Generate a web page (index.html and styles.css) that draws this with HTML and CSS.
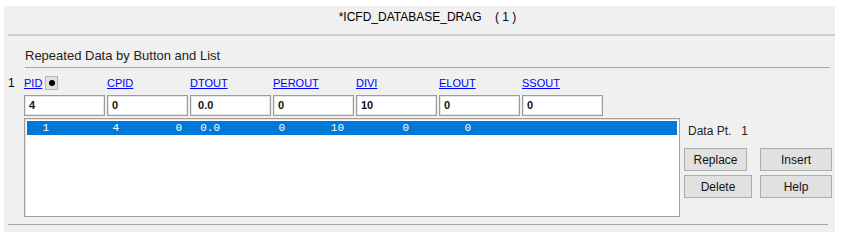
FILE: index.html
```html
<!DOCTYPE html>
<html lang="en">
<head>
  <meta charset="UTF-8" />
  <title>ICFD_DATABASE_DRAG</title>
  <link rel="stylesheet" href="styles.css">
</head>
<body>
  <div class="panel">
    <div class="title">*ICFD_DATABASE_DRAG    ( 1 )</div>

    <div class="section">
      <div class="legend">Repeated Data by Button and List</div>

      <div class="fields">
        <div class="rownum">1</div>
        <div class="head"><a href="#">PID</a><button class="pick"><span class="dot"></span></button></div>
        <div class="head"><a href="#">CPID</a></div>
        <div class="head"><a href="#">DTOUT</a></div>
        <div class="head"><a href="#">PEROUT</a></div>
        <div class="head"><a href="#">DIVI</a></div>
        <div class="head"><a href="#">ELOUT</a></div>
        <div class="head"><a href="#">SSOUT</a></div>

        <div></div>
        <div class="field">4</div>
        <div class="field">0</div>
        <div class="field"> 0.0</div>
        <div class="field">0</div>
        <div class="field">10</div>
        <div class="field">0</div>
        <div class="field">0</div>
      </div>

      <div class="body">
        <div class="list">
          <div class="item selected">
            <span class="c1">1</span>
            <span class="c2">4</span>
            <span class="c3">0</span>
            <span class="c4">0.0</span>
            <span class="c5">0</span>
            <span class="c6">10</span>
            <span class="c7">0</span>
            <span class="c8">0</span>
          </div>
        </div>
        <div class="side">
          <div class="datapt">Data Pt.&nbsp;&nbsp; 1</div>
          <div class="actions">
            <button class="replace">Replace</button>
            <button>Insert</button>
            <button class="delete">Delete</button>
            <button>Help</button>
          </div>
        </div>
      </div>

      <div class="bottom"></div>
    </div>
  </div>
</body>
</html>
```

FILE: styles.css
```css
body {
  margin: 0;
  background: #fff;
  font-family: 'Liberation Sans', Arial, sans-serif;
  color: #000;
}
.panel {
  margin: 6px 0 0 4px;
  width: 831px;
  height: 226px;
  background: #f0f0f0;
}
/* Title bar */
.title {
  height: 28px;
  line-height: 23px;
  text-align: center;
  font-size: 12px;
  white-space: pre;
  margin-left: 4px;
  padding-left: 12px;
  border-bottom: 2px solid #cfcfcf;
}
.section {
  padding: 0 0 0 4px;
}
.legend {
  margin: 10px 5px 0 17px;
  height: 20px;
  line-height: 20px;
  padding-bottom: 1px;
  font-size: 13px;
  color: #222;
  border-bottom: 1px solid #a8a8a8;
}
/* Header links and entry boxes */
.fields {
  display: grid;
  grid-template-columns: 14px repeat(7, 81px);
  column-gap: 2px;
  row-gap: 5px;
  margin-top: 8px;
}
.rownum {
  font-size: 12px;
  line-height: 14px;
}
.head {
  display: flex;
  align-items: center;
  height: 14px;
}
.head a {
  color: #0000ff;
  font-size: 11px;
  text-decoration: underline;
}
.pick {
  width: 13px;
  height: 14px;
  margin-left: 3px;
  padding: 0;
  border: 1px solid #b4b4b4;
  background: #e1e1e1;
  display: flex;
  align-items: center;
  justify-content: center;
}
.dot {
  width: 6px;
  height: 6px;
  border-radius: 50%;
  background: #000;
}
.field {
  height: 21px;
  box-sizing: border-box;
  border: 1px solid #9c9c9c;
  box-shadow: inset 0 0 0 1px #e6e6e6;
  background: #fff;
  padding-left: 4px;
  font-size: 11px;
  font-weight: bold;
  line-height: 19px;
  white-space: pre;
  color: #111;
}
/* List and side buttons */
.body {
  display: flex;
  margin: 2px 0 0 16px;
}
.list {
  width: 656px;
  height: 99px;
  box-sizing: border-box;
  border: 1px solid #a0a0a0;
  box-shadow: inset 1px 1px 0 #e3e3e3;
  background: #fff;
  padding: 2px;
}
.item {
  display: flex;
  height: 14px;
  line-height: 14px;
  font-family: 'Liberation Mono', 'DejaVu Sans Mono', monospace;
  font-size: 11px;
  white-space: pre;
}
.item span {
  text-align: right;
}
.selected {
  background: #0078d7;
  color: #fff;
}
.c1 { width: 22px; }
.c2 { width: 70px; }
.c3 { width: 63px; }
.c4 { width: 38px; }
.c5 { width: 65px; }
.c6 { width: 59px; }
.c7 { width: 65px; }
.c8 { width: 62px; }
.side {
  margin-left: 4px;
}
.datapt {
  margin-top: 4px;
  padding-left: 4px;
  line-height: 18px;
  font-size: 12px;
  color: #222;
}
.actions {
  display: grid;
  grid-template-columns: 72px 72px;
  column-gap: 4px;
  row-gap: 4px;
  margin-top: 8px;
}
.actions button {
  height: 23px;
  border: 1px solid #adadad;
  background: #e1e1e1;
  font-family: 'Liberation Sans', Arial, sans-serif;
  font-size: 12px;
  color: #111;
  padding: 0;
}
.actions .replace {
  width: 63px;
}
.actions .delete {
  width: 68px;
}
.bottom {
  margin: 7px 7px 0 0;
  border-top: 1px solid #a8a8a8;
}
```
